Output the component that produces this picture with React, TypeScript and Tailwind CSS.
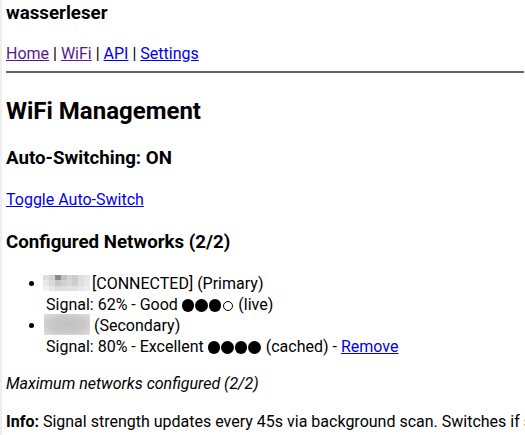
import React from 'react';

const Mosaic: React.FC = () => {
  // pixelated SSID placeholder (first network)
  const tiles = [
    ['#dedede', '#d2d2d2', '#8c898a', '#c2c2c4', '#d6d6d6', '#cbcbcd', '#dedede', '#e6e6e6'],
    ['#e8e8e8', '#dadada', '#c6c6c6', '#d0d0d0', '#d8d8d8', '#cecece', '#e0e0e0', '#e8e8e8'],
    ['#f2f2f2', '#e6e6e6', '#dcdcdc', '#dfdfdf', '#e3e3e3', '#e1e1e1', '#e8e8e8', '#efefef'],
  ];
  return (
    <span className="inline-block w-[47px] h-[17px] -ml-[3px] -mt-[10px] -mb-[3px] align-baseline overflow-hidden">
      {tiles.map((row, i) => (
        <span key={i} className="flex h-1/3">
          {row.map((c, j) => (
            <span key={j} className="flex-1" style={{ backgroundColor: c }} />
          ))}
        </span>
      ))}
    </span>
  );
};

const Blur: React.FC = () => (
  <span className="inline-block w-[46px] h-[21px] -ml-[2px] -mt-[15px] -mb-[4px] align-baseline overflow-hidden bg-[radial-gradient(ellipse_at_center,#c2c2c2_0%,#c9c9c9_55%,#e0e0e0_100%)]" />
);

const Dots: React.FC<{ filled: number }> = ({ filled }) => (
  <>
    {[0, 1, 2, 3].map((i) =>
      i < filled ? (
        <span key={i} className="inline-block w-[12.5px] h-[12.5px] mr-[1px] rounded-full bg-black align-[-2px]" />
      ) : (
        <span key={i} className="inline-block w-[10px] h-[10px] ml-[1px] mr-[1px] rounded-full border border-black align-[-1.5px]" />
      )
    )}
  </>
);

export default function App() {
  const visited = 'text-[#551A8B] underline';
  const link = 'text-[#0000EE] underline';

  return (
    <div
      className="w-[525px] h-[435px] overflow-hidden bg-white text-black border-l-2 border-[#eeeeee] pl-[4px] pr-[1px] whitespace-nowrap"
      style={{ fontFamily: 'Roboto, "Liberation Sans", sans-serif' }}
    >
      <h3 className="mt-[2px] text-[18.72px] leading-[22px] font-bold">wasserleser</h3>

      <p className="mt-[20px] text-[16px] leading-[19px]">
        <a href="#" className={visited}>Home</a> | <a href="#" className={visited}>WiFi</a> |{' '}
        <a href="#" className={link}>API</a> | <a href="#" className={link}>Settings</a>
      </p>

      <hr className="mt-[8px] h-[2px] border-0 bg-[#646464]" />

      <h2 className="mt-[24px] text-[24px] leading-[28px] font-bold">WiFi Management</h2>

      <h3 className="mt-[22px] text-[18.72px] leading-[22px] font-bold">Auto-Switching: ON</h3>

      <p className="mt-[21px] text-[16px] leading-[19px]">
        <a href="#" className={link}>Toggle Auto-Switch</a>
      </p>

      <h3 className="mt-[22px] text-[18.72px] leading-[22px] font-bold">Configured Networks (2/2)</h3>

      <ul className="mt-[19.5px] pl-[40px] list-disc text-[16px] leading-[21px]">
        <li>
          <Mosaic />
          <span className="ml-[2px]">[CONNECTED] (Primary)</span>
          <br />
          Signal: 62% - Good <Dots filled={3} /> (live)
        </li>
        <li>
          <Blur /> (Secondary)
          <br />
          Signal: 80% - Excellent <Dots filled={4} /> (cached) - <a href="#" className={link}>Remove</a>
        </li>
      </ul>

      <p className="mt-[17.5px] text-[16px] leading-[19px] italic">Maximum networks configured (2/2)</p>

      <p className="mt-[18.5px] text-[16px] leading-[19px]">
        <b>Info:</b> Signal strength updates every 45s via background scan. Switches if signal drops below threshold.
      </p>
    </div>
  );
}
